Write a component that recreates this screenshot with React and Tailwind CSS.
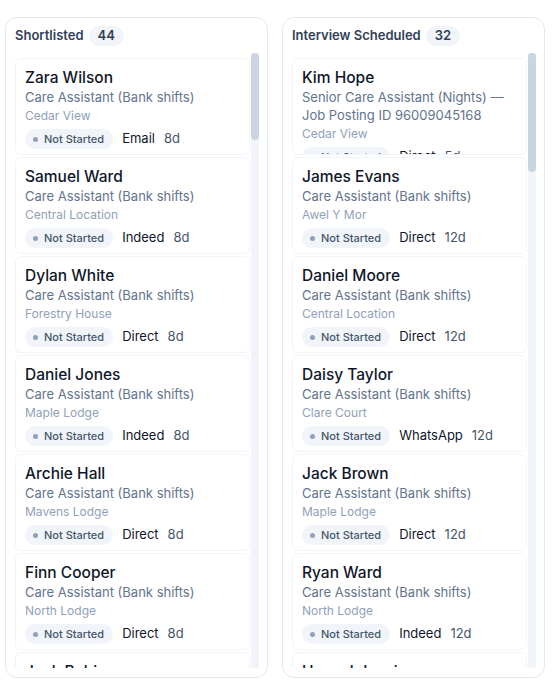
const shortlisted = [
  { name: 'Zara Wilson', role: 'Care Assistant (Bank shifts)', site: 'Cedar View', source: 'Email', age: '8d' },
  { name: 'Samuel Ward', role: 'Care Assistant (Bank shifts)', site: 'Central Location', source: 'Indeed', age: '8d' },
  { name: 'Dylan White', role: 'Care Assistant (Bank shifts)', site: 'Forestry House', source: 'Direct', age: '8d' },
  { name: 'Daniel Jones', role: 'Care Assistant (Bank shifts)', site: 'Maple Lodge', source: 'Indeed', age: '8d' },
  { name: 'Archie Hall', role: 'Care Assistant (Bank shifts)', site: 'Mavens Lodge', source: 'Direct', age: '8d' },
  { name: 'Finn Cooper', role: 'Care Assistant (Bank shifts)', site: 'North Lodge', source: 'Direct', age: '8d' },
  { name: 'Jack Robinson', role: 'Care Assistant (Bank shifts)', site: 'Clare Court', source: 'Direct', age: '8d' },
];

const interview = [
  { name: 'Kim Hope', role: 'Senior Care Assistant (Nights) — Job Posting ID 96009045168', site: 'Cedar View', source: 'Direct', age: '5d' },
  { name: 'James Evans', role: 'Care Assistant (Bank shifts)', site: 'Awel Y Mor', source: 'Direct', age: '12d' },
  { name: 'Daniel Moore', role: 'Care Assistant (Bank shifts)', site: 'Central Location', source: 'Direct', age: '12d' },
  { name: 'Daisy Taylor', role: 'Care Assistant (Bank shifts)', site: 'Clare Court', source: 'WhatsApp', age: '12d' },
  { name: 'Jack Brown', role: 'Care Assistant (Bank shifts)', site: 'Maple Lodge', source: 'Direct', age: '12d' },
  { name: 'Ryan Ward', role: 'Care Assistant (Bank shifts)', site: 'North Lodge', source: 'Indeed', age: '12d' },
  { name: 'Hannah Lewis', role: 'Care Assistant (Bank shifts)', site: 'Cedar View', source: 'Direct', age: '12d' },
];

const VIEW = 615; // visible list height
const ROW = 99; // card + gap

function Card({ c }) {
  return (
    <div className="h-[97px] shrink-0 overflow-hidden rounded-md border border-slate-100 bg-white px-[9px] pt-[8px]">
      <div className="text-[15.5px] leading-[21px] font-medium text-slate-900">{c.name}</div>
      <div className="text-[13px] leading-[18px] text-slate-500">{c.role}</div>
      <div className="text-xs leading-5 text-slate-400">{c.site}</div>
      <div className="mt-[3px] flex items-center gap-[9px]">
        <span className="inline-flex h-5 items-center gap-1.5 rounded-full bg-slate-100 pl-2 pr-[9px] text-[11px] font-medium text-slate-600">
          <span className="h-[5px] w-[5px] rounded-full bg-slate-400" />
          Not Started
        </span>
        <span className="text-[13px] text-slate-900">{c.source}</span>
        <span className="text-[13px] text-slate-600">{c.age}</span>
      </div>
    </div>
  );
}

function Column({ title, count, cards }) {
  // thumb length follows the full list length, not just the rendered cards
  const thumb = Math.round((VIEW * VIEW) / (count * ROW + 5));
  return (
    <div className="flex h-[661px] w-[263px] flex-col rounded-xl border border-slate-200 bg-white pr-[8px] pb-[9px] pl-[9px] pt-[8px]">
      <div className="flex h-5 items-center gap-[5px]">
        <span className="text-[13px] font-semibold text-slate-700">{title}</span>
        <span className="inline-flex h-5 items-center rounded-full bg-slate-100 px-[9px] text-[13px] font-semibold text-slate-700">{count}</span>
      </div>
      <div className="mt-[7px] flex min-h-0 flex-1">
        <div className="flex min-w-0 flex-1 flex-col gap-[2px] overflow-hidden pt-[5px] pr-px">
          {cards.map((c, i) => (
            <Card key={i} c={c} />
          ))}
        </div>
        <div className="w-2 shrink-0 bg-slate-100">
          <div className="w-2 rounded-full bg-slate-300" style={{ height: thumb }} />
        </div>
      </div>
    </div>
  );
}

export default function App() {
  return (
    <div className="flex min-h-screen gap-[14px] bg-white pt-[17px] pl-[5px] font-[Inter,sans-serif]">
      <Column title="Shortlisted" count={44} cards={shortlisted} />
      <Column title="Interview Scheduled" count={32} cards={interview} />
    </div>
  );
}
